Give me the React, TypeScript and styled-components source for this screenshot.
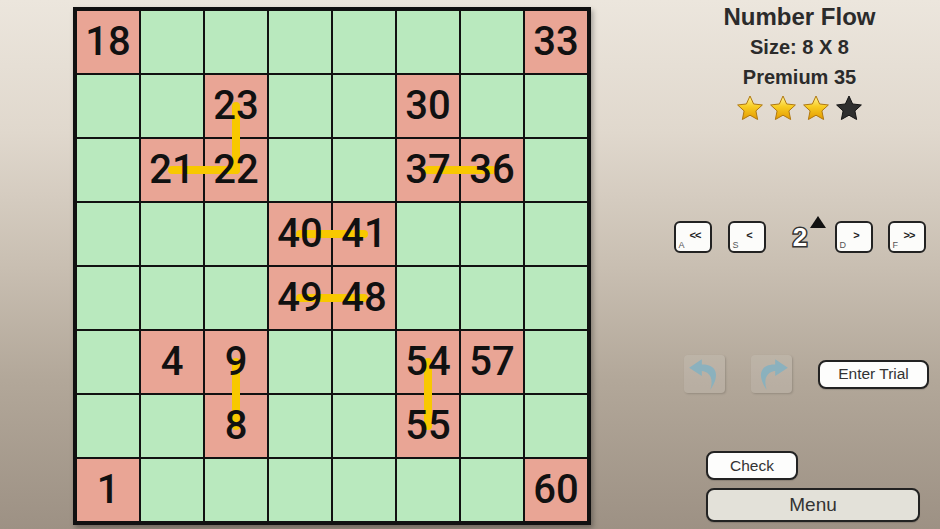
import React from "react";
import styled, { createGlobalStyle } from "styled-components";

const CELL = 62;
const GAP = 2;

// numbered cells: "row-col" -> value
const numbers: Record<string, number> = {
  "0-0": 18,
  "0-7": 33,
  "1-2": 23,
  "1-5": 30,
  "2-1": 21,
  "2-2": 22,
  "2-5": 37,
  "2-6": 36,
  "3-3": 40,
  "3-4": 41,
  "4-3": 49,
  "4-4": 48,
  "5-1": 4,
  "5-2": 9,
  "5-5": 54,
  "5-6": 57,
  "6-2": 8,
  "6-5": 55,
  "7-0": 1,
  "7-7": 60,
};

// drawn links between cells [r1, c1, r2, c2]
const links: [number, number, number, number][] = [
  [1, 2, 2, 2],
  [2, 1, 2, 2],
  [2, 5, 2, 6],
  [3, 3, 3, 4],
  [4, 3, 4, 4],
  [5, 2, 6, 2],
  [5, 5, 6, 5],
];

const center = (i: number) => CELL / 2 + i * (CELL + GAP);

const GlobalStyle = createGlobalStyle`
  html, body {
    margin: 0;
    padding: 0;
    width: 940px;
    height: 529px;
    overflow: hidden;
  }
`;

const Screen = styled.div`
  width: 940px;
  height: 529px;
  display: flex;
  align-items: flex-start;
  font-family: "Liberation Sans", Arial, Helvetica, sans-serif;
  background: linear-gradient(
    180deg,
    #ece6dd 0%,
    #e0d8cd 25%,
    #c9bfb2 50%,
    #b2a799 72%,
    #9d9184 100%
  );
`;

const Board = styled.div`
  position: relative;
  margin: 7px 0 0 73px;
  border: 4px solid #111;
  background: #111;
  display: grid;
  grid-template-columns: repeat(8, ${CELL}px);
  grid-template-rows: repeat(8, ${CELL}px);
  gap: ${GAP}px;
  box-shadow: 2px 3px 5px rgba(0, 0, 0, 0.3);
`;

const Cell = styled.div<{ $marked: boolean }>`
  display: flex;
  align-items: center;
  justify-content: center;
  background: ${(p) => (p.$marked ? "#e9a595" : "#b9e9be")};
`;

const Num = styled.span`
  position: relative;
  z-index: 2;
  font-family: Roboto, "Liberation Sans", sans-serif;
  font-weight: 500;
  font-size: 40px;
  line-height: 1;
  color: #111;
`;

const Links = styled.svg`
  position: absolute;
  left: 0;
  top: 0;
  z-index: 1;
  pointer-events: none;
`;

const Panel = styled.div`
  margin-left: 68px;
  width: 281px;
  padding-top: 2px;
  display: flex;
  flex-direction: column;
`;

const Title = styled.div`
  text-align: center;
  font-weight: bold;
  font-size: 24px;
  line-height: 30px;
  color: #2b2b2b;
`;

const Sub = styled.div`
  text-align: center;
  font-weight: bold;
  font-size: 20px;
  line-height: 30px;
  color: #2b2b2b;
`;

const Stars = styled.div`
  display: flex;
  justify-content: center;
  gap: 5px;
  margin-top: 2px;
  height: 28px;
`;

const NavRow = styled.div`
  display: flex;
  justify-content: center;
  align-items: center;
  height: 32px;
  margin-top: 99px;
`;

const KeyButton = styled.div<{ $gap: number }>`
  position: relative;
  box-sizing: border-box;
  width: 38px;
  height: 32px;
  margin-right: ${(p) => p.$gap}px;
  border: 2px solid #222;
  border-radius: 6px;
  background: #fcfcfa;
  display: flex;
  justify-content: center;
  align-items: flex-start;
  padding: 6px 0 0 5px;
`;

const KeySymbol = styled.span`
  font-weight: bold;
  font-size: 11px;
  letter-spacing: -1px;
  color: #222;
`;

const KeyHint = styled.span`
  position: absolute;
  left: 3px;
  bottom: 1px;
  font-size: 9px;
  color: #555;
`;

const Counter = styled.div`
  position: relative;
  width: 69px;
  display: flex;
  justify-content: center;
`;

const CounterValue = styled.span`
  font-weight: bold;
  font-size: 26px;
  line-height: 30px;
  color: #fff;
  -webkit-text-stroke: 3px #333;
  paint-order: stroke fill;
`;

const Pointer = styled.span`
  position: absolute;
  left: 44px;
  top: -6px;
  width: 0;
  height: 0;
  border-left: 8px solid transparent;
  border-right: 8px solid transparent;
  border-bottom: 12px solid #111;
`;

const HistoryRow = styled.div`
  display: flex;
  align-items: center;
  gap: 26px;
  height: 38px;
  margin-top: 102px;
  padding-left: 25px;
`;

const HistoryButton = styled.div`
  width: 41px;
  height: 38px;
  border-radius: 4px;
  background: rgba(255, 255, 255, 0.12);
  box-shadow: 1px 1px 2px rgba(0, 0, 0, 0.18);
  display: flex;
  align-items: center;
  justify-content: center;
  opacity: 0.85;
`;

const Actions = styled.div`
  display: flex;
  flex-direction: column;
  align-items: flex-start;
  gap: 8px;
  margin-top: 58px;
  padding-left: 47px;
`;

const PlainButton = styled.div<{ $w: number; $h: number; $size: number; $bg?: string }>`
  box-sizing: border-box;
  width: ${(p) => p.$w}px;
  height: ${(p) => p.$h}px;
  border: 2px solid #222;
  border-radius: 8px;
  background: ${(p) => p.$bg || "#fdfdfc"};
  display: flex;
  align-items: center;
  justify-content: center;
  font-size: ${(p) => p.$size}px;
  color: #333;
  box-shadow: 0 1px 1px rgba(0, 0, 0, 0.15);
`;

const Star = ({ filled }: { filled: boolean }) => {
  const pts: string[] = [];
  for (let i = 0; i < 10; i++) {
    const r = i % 2 === 0 ? 13 : 6.2;
    const a = -Math.PI / 2 + (i * Math.PI) / 5;
    pts.push(`${(14 + r * Math.cos(a)).toFixed(2)},${(15 + r * Math.sin(a)).toFixed(2)}`);
  }
  return (
    <svg width="28" height="28" viewBox="0 0 28 28">
      <defs>
        <linearGradient id="gold" x1="0" y1="0" x2="0" y2="1">
          <stop offset="0" stopColor="#fff59a" />
          <stop offset="0.45" stopColor="#f8cc22" />
          <stop offset="1" stopColor="#e39a00" />
        </linearGradient>
      </defs>
      <polygon
        points={pts.join(" ")}
        fill={filled ? "url(#gold)" : "#2f2f2f"}
        stroke={filled ? "#b07810" : "#151515"}
        strokeWidth="1"
        strokeLinejoin="round"
      />
    </svg>
  );
};

const HookArrow = ({ flip }: { flip?: boolean }) => (
  <svg width="36" height="34" viewBox="0 0 34 32" style={flip ? { transform: "scaleX(-1)" } : undefined}>
    <path d="M2 10 L14 2 L14 18 Z" fill="#84b3c4" />
    <path d="M13 7 C26 6 33 15 22 31 C25 22 23 14 13 13 Z" fill="#84b3c4" />
  </svg>
);

const keys = [
  { hint: "A", sym: "<<", gap: 16 },
  { hint: "S", sym: "<", gap: 0 },
];
const keysRight = [
  { hint: "D", sym: ">", gap: 15 },
  { hint: "F", sym: ">>", gap: 0 },
];

export default function App() {
  const size = 8 * CELL + 7 * GAP;
  return (
    <Screen>
      <GlobalStyle />
      <Board>
        {Array.from({ length: 64 }, (_, i) => {
          const key = `${Math.floor(i / 8)}-${i % 8}`;
          const n = numbers[key];
          return (
            <Cell key={key} $marked={n !== undefined}>
              {n !== undefined && <Num>{n}</Num>}
            </Cell>
          );
        })}
        <Links width={size} height={size} viewBox={`0 0 ${size} ${size}`}>
          {links.map(([r1, c1, r2, c2], i) => (
            <line
              key={i}
              x1={center(c1)}
              y1={center(r1)}
              x2={center(c2)}
              y2={center(r2)}
              stroke="#f8c800"
              strokeWidth="8"
              strokeLinecap="round"
            />
          ))}
        </Links>
      </Board>
      <Panel>
        <Title>Number Flow</Title>
        <Sub>Size: 8 X 8</Sub>
        <Sub>Premium 35</Sub>
        <Stars>
          <Star filled />
          <Star filled />
          <Star filled />
          <Star filled={false} />
        </Stars>
        <NavRow>
          {keys.map((k) => (
            <KeyButton key={k.hint} $gap={k.gap}>
              <KeySymbol>{k.sym}</KeySymbol>
              <KeyHint>{k.hint}</KeyHint>
            </KeyButton>
          ))}
          <Counter>
            <CounterValue>2</CounterValue>
            <Pointer />
          </Counter>
          {keysRight.map((k) => (
            <KeyButton key={k.hint} $gap={k.gap}>
              <KeySymbol>{k.sym}</KeySymbol>
              <KeyHint>{k.hint}</KeyHint>
            </KeyButton>
          ))}
        </NavRow>
        <HistoryRow>
          <HistoryButton>
            <HookArrow />
          </HistoryButton>
          <HistoryButton>
            <HookArrow flip />
          </HistoryButton>
          <PlainButton $w={111} $h={29} $size={15.5}>
            Enter Trial
          </PlainButton>
        </HistoryRow>
        <Actions>
          <PlainButton $w={92} $h={29} $size={15.5}>
            Check
          </PlainButton>
          <PlainButton $w={214} $h={34} $size={19} $bg="#e3e1d9">
            Menu
          </PlainButton>
        </Actions>
      </Panel>
    </Screen>
  );
}
